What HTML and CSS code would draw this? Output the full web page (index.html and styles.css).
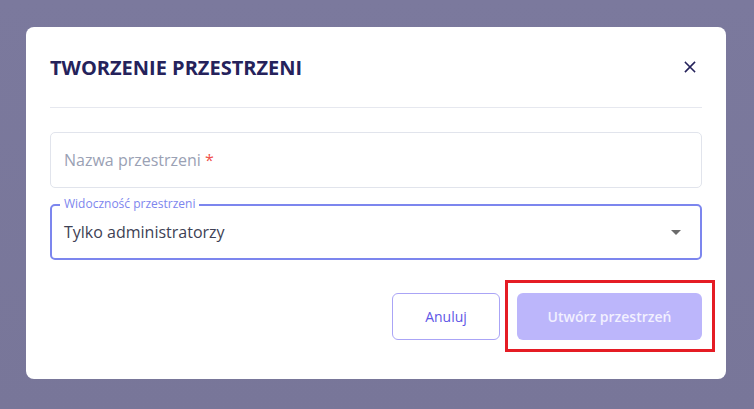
FILE: index.html
```html
<!DOCTYPE html>
<html lang="pl">
<head>
<meta charset="utf-8">
<link rel="stylesheet" href="styles.css">
</head>
<body>
<div class="backdrop">
  <div class="modal">
    <div class="modal-header">
      <h2 class="modal-title">TWORZENIE PRZESTRZENI</h2>
      <button class="close-btn" aria-label="Zamknij">
        <svg width="12" height="12" viewBox="0 0 12 12"><path d="M1.5 1.5 L10.5 10.5 M10.5 1.5 L1.5 10.5" stroke="#24215a" stroke-width="1.6" stroke-linecap="square"/></svg>
      </button>
    </div>
    <div class="divider"></div>
    <div class="form">
      <div class="field">
        <span class="placeholder">Nazwa przestrzeni</span><span class="req">*</span>
      </div>
      <div class="field select">
        <span class="legend">Widoczność przestrzeni</span>
        <span class="value">Tylko administratorzy</span>
        <svg class="caret" width="10" height="5" viewBox="0 0 10 5"><path d="M0 0 L10 0 L5 5 Z" fill="#6b6b6b"/></svg>
      </div>
    </div>
    <div class="actions">
      <button class="btn btn-outline">Anuluj</button>
      <div class="highlight-wrap">
        <button class="btn btn-primary">Utwórz przestrzeń</button>
        <div class="highlight"></div>
      </div>
    </div>
  </div>
</div>
</body>
</html>
```
FILE: styles.css
```css
* { box-sizing: border-box; }
html, body { margin: 0; padding: 0; }
body {
  width: 754px;
  height: 409px;
  overflow: hidden;
  font-family: "Open Sans", "Noto Sans", sans-serif;
  background: #7a789c;
}
.backdrop {
  width: 754px;
  height: 409px;
  padding: 27px 28px 30px 26px;
  background: linear-gradient(180deg, #7b799d 0%, #787699 100%);
}
.modal {
  width: 700px;
  height: 352px;
  background: #ffffff;
  border-radius: 8px;
  padding: 0 24px;
  display: flex;
  flex-direction: column;
}
.modal-header {
  display: flex;
  align-items: center;
  justify-content: space-between;
  height: 80px;
}
.modal-title {
  margin: 0;
  font-size: 20px;
  font-weight: 700;
  color: #25225b;
}
.close-btn {
  background: none;
  border: none;
  padding: 0;
  width: 28px;
  height: 28px;
  display: flex;
  align-items: center;
  justify-content: center;
  margin-right: -2px;
}
.divider {
  height: 1px;
  background: #e6e8ef;
}
.form {
  display: flex;
  flex-direction: column;
  gap: 16px;
  margin-top: 24px;
}
.field {
  height: 56px;
  border: 1px solid #e1e4ec;
  border-radius: 5px;
  display: flex;
  align-items: center;
  padding: 0 13px;
  font-size: 16px;
}
.placeholder { color: #9aa1b4; }
.req { color: #f0524a; margin-left: 4px; }
.select {
  position: relative;
  border: 2px solid #7c86ee;
  padding: 0 12px;
  justify-content: space-between;
}
.legend {
  position: absolute;
  top: -9px;
  left: 8px;
  padding: 0 4px;
  background: #ffffff;
  font-size: 12px;
  line-height: 14px;
  color: #7d86ee;
}
.value { color: #3e4154; }
.caret { margin-right: 7px; margin-top: 1px; }
.actions {
  display: flex;
  justify-content: flex-end;
  gap: 17px;
  margin-top: 33px;
}
.btn {
  height: 47px;
  border-radius: 6px;
  font-family: "Open Sans", "Noto Sans", sans-serif;
  font-size: 14px;
  padding: 0;
}
.btn-outline {
  width: 108px;
  background: #ffffff;
  border: 1px solid #aaa4f6;
  color: #5f57e6;
  font-weight: 500;
}
.highlight-wrap { position: relative; }
.btn-primary {
  width: 185px;
  background: #bcb6fb;
  border: none;
  color: #f2f0ff;
  font-weight: 600;
}
.highlight {
  position: absolute;
  left: -12px;
  top: -13px;
  right: -13px;
  bottom: -12px;
  border: 3px solid #e51c24;
  pointer-events: none;
}
```
